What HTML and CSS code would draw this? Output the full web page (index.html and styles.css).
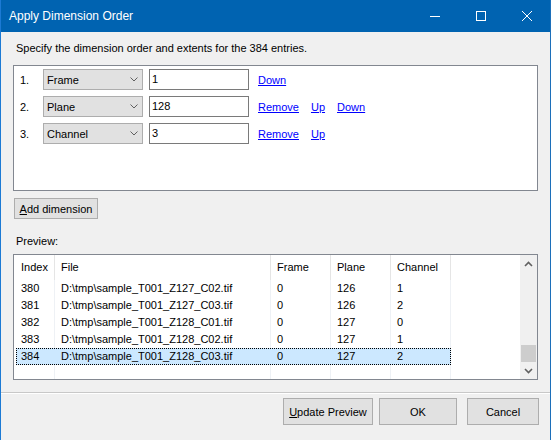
FILE: index.html
```html
<!DOCTYPE html>
<html lang="en">
<head>
    <meta charset="UTF-8">
    <title>Apply Dimension Order</title>
    <link rel="stylesheet" href="styles.css">
</head>
<body>
    <div class="window">
        <div class="titlebar">
            <span class="title">Apply Dimension Order</span>
            <div class="caption">
                <span class="cap-btn">
                    <svg width="10" height="10" viewBox="0 0 10 10"><path d="M0 5.5H10" stroke="#fff" stroke-width="1"/></svg>
                </span>
                <span class="cap-btn">
                    <svg width="10" height="10" viewBox="0 0 10 10"><rect x="0.5" y="0.5" width="9" height="9" fill="none" stroke="#fff" stroke-width="1"/></svg>
                </span>
                <span class="cap-btn">
                    <svg width="10" height="10" viewBox="0 0 10 10"><path d="M0 0L10 10M10 0L0 10" stroke="#fff" stroke-width="1"/></svg>
                </span>
            </div>
        </div>

        <div class="client">
            <div class="intro">Specify the dimension order and extents for the 384 entries.</div>

            <div class="dims">
                <div class="dim-row">
                    <span class="num">1.</span>
                    <div class="combo"><span>Frame</span><svg width="8" height="5" viewBox="0 0 8 5"><path d="M0.5 0.5L4 4L7.5 0.5" fill="none" stroke="#606060"/></svg></div>
                    <div class="textbox">1</div>
                    <div class="links"><a href="#">Down</a></div>
                </div>
                <div class="dim-row">
                    <span class="num">2.</span>
                    <div class="combo"><span>Plane</span><svg width="8" height="5" viewBox="0 0 8 5"><path d="M0.5 0.5L4 4L7.5 0.5" fill="none" stroke="#606060"/></svg></div>
                    <div class="textbox">128</div>
                    <div class="links"><a href="#">Remove</a><a href="#">Up</a><a href="#">Down</a></div>
                </div>
                <div class="dim-row">
                    <span class="num">3.</span>
                    <div class="combo"><span>Channel</span><svg width="8" height="5" viewBox="0 0 8 5"><path d="M0.5 0.5L4 4L7.5 0.5" fill="none" stroke="#606060"/></svg></div>
                    <div class="textbox">3</div>
                    <div class="links"><a href="#">Remove</a><a href="#">Up</a></div>
                </div>
            </div>

            <div class="add-line">
                <button class="btn btn-add"><u>A</u>dd dimension</button>
            </div>

            <div class="label">Preview:</div>

            <div class="list">
                <div class="list-main">
                    <div class="lv-row lv-head">
                        <div class="lv-item">
                            <div class="cell c-index">Index</div>
                            <div class="cell c-file">File</div>
                            <div class="cell c-num">Frame</div>
                            <div class="cell c-num">Plane</div>
                            <div class="cell c-num">Channel</div>
                        </div>
                    </div>
                    <div class="lv-row">
                        <div class="lv-item">
                            <div class="cell c-index">380</div>
                            <div class="cell c-file">D:\tmp\sample_T001_Z127_C02.tif</div>
                            <div class="cell c-num">0</div>
                            <div class="cell c-num">126</div>
                            <div class="cell c-num">1</div>
                        </div>
                    </div>
                    <div class="lv-row">
                        <div class="lv-item">
                            <div class="cell c-index">381</div>
                            <div class="cell c-file">D:\tmp\sample_T001_Z127_C03.tif</div>
                            <div class="cell c-num">0</div>
                            <div class="cell c-num">126</div>
                            <div class="cell c-num">2</div>
                        </div>
                    </div>
                    <div class="lv-row">
                        <div class="lv-item">
                            <div class="cell c-index">382</div>
                            <div class="cell c-file">D:\tmp\sample_T001_Z128_C01.tif</div>
                            <div class="cell c-num">0</div>
                            <div class="cell c-num">127</div>
                            <div class="cell c-num">0</div>
                        </div>
                    </div>
                    <div class="lv-row">
                        <div class="lv-item">
                            <div class="cell c-index">383</div>
                            <div class="cell c-file">D:\tmp\sample_T001_Z128_C02.tif</div>
                            <div class="cell c-num">0</div>
                            <div class="cell c-num">127</div>
                            <div class="cell c-num">1</div>
                        </div>
                    </div>
                    <div class="lv-row selected">
                        <div class="lv-item">
                            <div class="cell c-index">384</div>
                            <div class="cell c-file">D:\tmp\sample_T001_Z128_C03.tif</div>
                            <div class="cell c-num">0</div>
                            <div class="cell c-num">127</div>
                            <div class="cell c-num">2</div>
                        </div>
                    </div>
                    <div class="lv-row lv-fill">
                        <div class="lv-item">
                            <div class="cell c-index"></div>
                            <div class="cell c-file"></div>
                            <div class="cell c-num"></div>
                            <div class="cell c-num"></div>
                            <div class="cell c-num"></div>
                        </div>
                    </div>
                </div>
                <div class="scrollbar">
                    <div class="sb-arrow">
                        <svg width="9" height="6" viewBox="0 0 9 6"><path d="M1 5L4.5 1.5L8 5" fill="none" stroke="#606060" stroke-width="1.6"/></svg>
                    </div>
                    <div class="sb-track">
                        <div class="sb-thumb"></div>
                    </div>
                    <div class="sb-arrow">
                        <svg width="9" height="6" viewBox="0 0 9 6"><path d="M1 1L4.5 4.5L8 1" fill="none" stroke="#606060" stroke-width="1.6"/></svg>
                    </div>
                </div>
            </div>
        </div>

        <div class="footer">
            <button class="btn btn-update"><u>U</u>pdate Preview</button>
            <button class="btn btn-ok">OK</button>
            <button class="btn btn-cancel">Cancel</button>
        </div>
    </div>
</body>
</html>
```

FILE: styles.css
```css
* {
    box-sizing: border-box;
}
body {
    margin: 0;
    font-family: "Liberation Sans", Arial, sans-serif;
    font-size: 11px;
    color: #000;
}
.window {
    width: 551px;
    height: 440px;
    background: #f0f0f0;
    border-left: 1px solid #1c7ad4;
    border-right: 1px solid #1c6fba;
    display: flex;
    flex-direction: column;
}
.titlebar {
    height: 32px;
    background: #0063b1;
    color: #fff;
    display: flex;
    align-items: center;
}
.title {
    flex: 1;
    padding-left: 8px;
    font-size: 12px;
}
.caption {
    display: flex;
    align-self: stretch;
}
.cap-btn {
    width: 46px;
    display: flex;
    align-items: center;
    justify-content: center;
}
.client {
    padding: 0 12px;
}
.intro {
    margin-top: 9px;
    padding-left: 3px;
    line-height: 14px;
}

/* dimensions panel */
.dims {
    margin-top: 10px;
    height: 126px;
    background: #fff;
    border: 1px solid #828790;
    padding: 3px 0 0 6px;
    display: flex;
    flex-direction: column;
    gap: 6px;
}
.dim-row {
    display: flex;
    align-items: center;
    height: 21px;
}
.num {
    width: 23px;
}
.combo {
    width: 100px;
    height: 21px;
    background: #e1e1e1;
    border: 1px solid #adadad;
    display: flex;
    align-items: center;
    justify-content: space-between;
    padding: 0 4px 0 3px;
}
.textbox {
    width: 100px;
    height: 21px;
    margin-left: 6px;
    background: #fff;
    border: 1px solid #7a7a7a;
    padding: 0 3px 0 2px;
    line-height: 19px;
}
.links {
    margin-left: 9px;
    display: flex;
    gap: 12px;
}
.links a {
    color: #0000ff;
    text-decoration: underline;
}

/* buttons */
.btn {
    background: #e1e1e1;
    border: 1px solid #adadad;
    font: inherit;
    color: #000;
    padding: 0;
}
.add-line {
    margin-top: 7px;
    padding-left: 1px;
}
.btn-add {
    width: 84px;
    height: 21px;
    display: block;
}
.label {
    margin-top: 15px;
    padding-left: 3px;
    line-height: 14px;
}

/* list view */
.list {
    margin-top: 6px;
    height: 126px;
    background: #fff;
    border: 1px solid #828790;
    display: flex;
}
.list-main {
    flex: 1;
    display: flex;
    flex-direction: column;
}
.lv-row {
    display: flex;
    padding-left: 2px;
    height: 17px;
    line-height: 17px;
}
.lv-item {
    display: flex;
}
.lv-head {
    height: 25px;
    line-height: 25px;
}
.lv-fill {
    flex: 1;
}
.cell {
    padding-left: 6px;
    border-right: 1px solid #eef1f5;
    white-space: nowrap;
    overflow: hidden;
}
.lv-head .cell {
    border-right-color: #e5e5e5;
}
.c-index {
    width: 39px;
    padding-left: 5px;
}
.c-file {
    width: 216px;
}
.c-num {
    width: 60px;
}
.selected .lv-item {
    background: #cce8ff;
    outline: 1px dotted #000;
    outline-offset: -1px;
}
.selected .cell {
    border-right-color: transparent;
}
.scrollbar {
    width: 17px;
    background: #f0f0f0;
    display: flex;
    flex-direction: column;
}
.sb-arrow {
    height: 17px;
    display: flex;
    align-items: center;
    justify-content: center;
}
.sb-track {
    flex: 1;
    display: flex;
    flex-direction: column;
    justify-content: flex-end;
}
.sb-thumb {
    height: 17px;
    margin: 0 1px;
    background: #cdcdcd;
}

/* bottom buttons */
.footer {
    margin-top: 12px;
    border-top: 1px solid #c8c8c8;
    box-shadow: inset 0 1px 0 #fff;
    padding: 5px 11px 0 0;
    display: flex;
    justify-content: flex-end;
}
.footer .btn {
    height: 27px;
}
.btn-update {
    width: 90px;
}
.btn-ok {
    width: 78px;
    margin-left: 6px;
}
.btn-cancel {
    width: 72px;
    margin-left: 10px;
}
```
